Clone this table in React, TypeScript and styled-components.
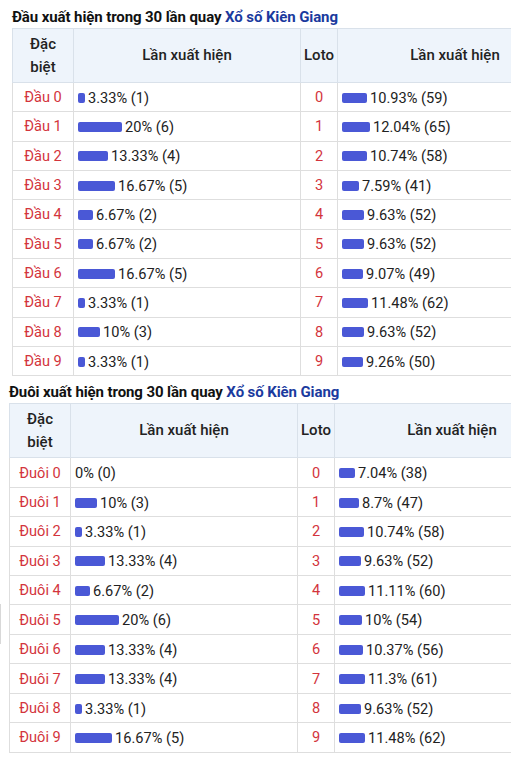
import React from "react";
import styled, { createGlobalStyle } from "styled-components";

const Global = createGlobalStyle`
  html, body { margin: 0; padding: 0; background: #fff; overflow: hidden; }
  body { font-family: Roboto, "Noto Sans", Arial, sans-serif; color: #222; }
`;

const Page = styled.div`
  width: 511px;
  height: 759px;
  overflow: hidden;
  position: relative;
  padding-top: 8px;
  box-sizing: border-box;
`;

const Section = styled.section<{ $indent: number; $gap: number }>`
  padding-left: ${(p) => p.$indent}px;
  margin-bottom: ${(p) => p.$gap}px;
`;

const Title = styled.h3`
  margin: 0 0 2px 0;
  font-size: 15px;
  line-height: 18px;
  font-weight: 700;
  color: #111;
  white-space: nowrap;
  letter-spacing: -0.1px;
`;

const TitleLink = styled.span`
  color: #1a3a9e;
`;

const Table = styled.table`
  border-collapse: collapse;
  table-layout: fixed;
  width: 561px;
  font-size: 14.6px;
`;

const HeadCell = styled.th<{ $w?: number }>`
  ${(p) => (p.$w ? `width: ${p.$w}px;` : "")}
  background: #eef4fb;
  border: 1px solid #d9e1ea;
  font-weight: 500;
  font-size: 15px;
  line-height: 23px;
  color: #222;
  text-align: center;
  padding: 3px 2px;
  height: 54px;
  box-sizing: border-box;
`;

const Row = styled.tr<{ $h: number }>`
  height: ${(p) => p.$h}px;
`;

const Cell = styled.td<{ $label?: boolean }>`
  border: 1px solid #dedede;
  padding: 0 4px;
  line-height: 18px;
  white-space: nowrap;
  overflow: hidden;
  color: ${(p) => (p.$label ? "#d3343c" : "#222")};
  text-align: ${(p) => (p.$label ? "center" : "left")};
`;

const BarWrap = styled.span`
  display: inline-flex;
  align-items: center;
  gap: 3px;
  vertical-align: middle;
`;

const Bar = styled.span`
  display: inline-block;
  height: 10px;
  background: #4a58d6;
  border-radius: 2px;
`;

const Decoration = styled.div`
  position: absolute;
  left: 0;
  top: 604px;
  width: 1px;
  height: 40px;
  background: #d8d8d8;
`;

type Entry = [number, number];

const dau: Entry[] = [
  [3.33, 1], [20, 6], [13.33, 4], [16.67, 5], [6.67, 2],
  [6.67, 2], [16.67, 5], [3.33, 1], [10, 3], [3.33, 1],
];
const dauLoto: Entry[] = [
  [10.93, 59], [12.04, 65], [10.74, 58], [7.59, 41], [9.63, 52],
  [9.63, 52], [9.07, 49], [11.48, 62], [9.63, 52], [9.26, 50],
];
const duoi: Entry[] = [
  [0, 0], [10, 3], [3.33, 1], [13.33, 4], [6.67, 2],
  [20, 6], [13.33, 4], [13.33, 4], [3.33, 1], [16.67, 5],
];
const duoiLoto: Entry[] = [
  [7.04, 38], [8.7, 47], [10.74, 58], [9.63, 52], [11.11, 60],
  [10, 54], [10.37, 56], [11.3, 61], [9.63, 52], [11.48, 62],
];

const Stat: React.FC<{ e: Entry; scale: number }> = ({ e, scale }) => {
  const [pct, n] = e;
  const w = Math.round(pct * scale);
  return (
    <BarWrap>
      {w > 0 && <Bar style={{ width: w }} />}
      <span>
        {pct}% ({n})
      </span>
    </BarWrap>
  );
};

const StatTable: React.FC<{
  label: string;
  left: Entry[];
  right: Entry[];
  rowH: number;
}> = ({ label, left, right, rowH }) => (
  <Table>
    <thead>
      <tr>
        <HeadCell $w={61}>
          Đặc
          <br />
          biệt
        </HeadCell>
        <HeadCell $w={227}>Lần xuất hiện</HeadCell>
        <HeadCell $w={37}>Loto</HeadCell>
        <HeadCell>Lần xuất hiện</HeadCell>
      </tr>
    </thead>
    <tbody>
      {left.map((e, i) => (
        <Row key={i} $h={rowH}>
          <Cell $label>
            {label} {i}
          </Cell>
          <Cell>
            <Stat e={e} scale={2.22} />
          </Cell>
          <Cell $label>{i}</Cell>
          <Cell>
            <Stat e={right[i]} scale={2.3} />
          </Cell>
        </Row>
      ))}
    </tbody>
  </Table>
);

export default function App() {
  return (
    <Page>
      <Global />
      <Section $indent={12} $gap={7}>
        <Title>
          Đầu xuất hiện trong 30 lần quay <TitleLink>Xổ số Kiên Giang</TitleLink>
        </Title>
        <StatTable label="Đầu" left={dau} right={dauLoto} rowH={29.33} />
      </Section>
      <Section $indent={9} $gap={0}>
        <Title>
          Đuôi xuất hiện trong 30 lần quay <TitleLink>Xổ số Kiên Giang</TitleLink>
        </Title>
        <StatTable label="Đuôi" left={duoi} right={duoiLoto} rowH={29.44} />
      </Section>
      <Decoration />
    </Page>
  );
}
